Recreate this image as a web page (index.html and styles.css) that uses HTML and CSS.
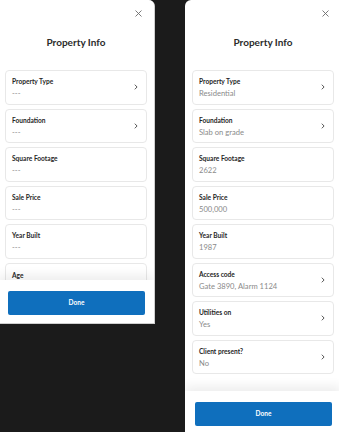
FILE: index.html
```html
<!DOCTYPE html>
<html lang="en">
<head>
  <meta charset="UTF-8" />
  <meta name="viewport" content="width=device-width, initial-scale=1.0"/>
  <title>Property Info</title>
  <link rel="stylesheet" href="styles.css">
</head>
<body>

<div class="panel panel-empty">
  <div class="panel-head">
    <div class="close-row">
      <button class="close-btn" type="button" aria-label="Close">
        <svg width="7" height="7" viewBox="0 0 7 7"><path d="M0.5 0.5 L6.5 6.5 M6.5 0.5 L0.5 6.5" stroke="#6b6b6b" stroke-width="0.9" fill="none"/></svg>
      </button>
    </div>
    <h1 class="title">Property Info</h1>
  </div>

  <div class="panel-list">
    <div class="card">
      <div class="card-text">
        <div class="card-label">Property Type</div>
        <div class="card-value">---</div>
      </div>
      <svg class="chevron" width="4" height="6" viewBox="0 0 4 6"><path d="M0.8 0.7 L3.1 3 L0.8 5.3" stroke="#555" stroke-width="1" fill="none"/></svg>
    </div>
    <div class="card">
      <div class="card-text">
        <div class="card-label">Foundation</div>
        <div class="card-value">---</div>
      </div>
      <svg class="chevron" width="4" height="6" viewBox="0 0 4 6"><path d="M0.8 0.7 L3.1 3 L0.8 5.3" stroke="#555" stroke-width="1" fill="none"/></svg>
    </div>
    <div class="card">
      <div class="card-text">
        <div class="card-label">Square Footage</div>
        <div class="card-value">---</div>
      </div>
    </div>
    <div class="card">
      <div class="card-text">
        <div class="card-label">Sale Price</div>
        <div class="card-value">---</div>
      </div>
    </div>
    <div class="card">
      <div class="card-text">
        <div class="card-label">Year Built</div>
        <div class="card-value">---</div>
      </div>
    </div>
    <div class="card card-cut">
      <div class="card-text">
        <div class="card-label">Age</div>
      </div>
    </div>
  </div>

  <div class="panel-foot">
    <button class="done-btn" type="button">Done</button>
  </div>
</div>

<div class="panel panel-filled">
  <div class="panel-head">
    <div class="close-row">
      <button class="close-btn" type="button" aria-label="Close">
        <svg width="7" height="7" viewBox="0 0 7 7"><path d="M0.5 0.5 L6.5 6.5 M6.5 0.5 L0.5 6.5" stroke="#6b6b6b" stroke-width="0.9" fill="none"/></svg>
      </button>
    </div>
    <h1 class="title">Property Info</h1>
  </div>

  <div class="panel-list">
    <div class="card">
      <div class="card-text">
        <div class="card-label">Property Type</div>
        <div class="card-value">Residential</div>
      </div>
      <svg class="chevron" width="4" height="6" viewBox="0 0 4 6"><path d="M0.8 0.7 L3.1 3 L0.8 5.3" stroke="#555" stroke-width="1" fill="none"/></svg>
    </div>
    <div class="card">
      <div class="card-text">
        <div class="card-label">Foundation</div>
        <div class="card-value">Slab on grade</div>
      </div>
      <svg class="chevron" width="4" height="6" viewBox="0 0 4 6"><path d="M0.8 0.7 L3.1 3 L0.8 5.3" stroke="#555" stroke-width="1" fill="none"/></svg>
    </div>
    <div class="card">
      <div class="card-text">
        <div class="card-label">Square Footage</div>
        <div class="card-value">2622</div>
      </div>
    </div>
    <div class="card">
      <div class="card-text">
        <div class="card-label">Sale Price</div>
        <div class="card-value">500,000</div>
      </div>
    </div>
    <div class="card">
      <div class="card-text">
        <div class="card-label">Year Built</div>
        <div class="card-value">1987</div>
      </div>
    </div>
    <div class="card">
      <div class="card-text">
        <div class="card-label">Access code</div>
        <div class="card-value">Gate 3890, Alarm 1124</div>
      </div>
      <svg class="chevron" width="4" height="6" viewBox="0 0 4 6"><path d="M0.8 0.7 L3.1 3 L0.8 5.3" stroke="#555" stroke-width="1" fill="none"/></svg>
    </div>
    <div class="card">
      <div class="card-text">
        <div class="card-label">Utilities on</div>
        <div class="card-value">Yes</div>
      </div>
      <svg class="chevron" width="4" height="6" viewBox="0 0 4 6"><path d="M0.8 0.7 L3.1 3 L0.8 5.3" stroke="#555" stroke-width="1" fill="none"/></svg>
    </div>
    <div class="card">
      <div class="card-text">
        <div class="card-label">Client present?</div>
        <div class="card-value">No</div>
      </div>
      <svg class="chevron" width="4" height="6" viewBox="0 0 4 6"><path d="M0.8 0.7 L3.1 3 L0.8 5.3" stroke="#555" stroke-width="1" fill="none"/></svg>
    </div>
  </div>

  <div class="panel-foot">
    <button class="done-btn" type="button">Done</button>
  </div>
</div>

</body>
</html>
```

FILE: styles.css
```css
body {
  margin: 0;
  width: 339px;
  height: 432px;
  overflow: hidden;
  background-color: #1b1b1b;
  display: flex;
  align-items: flex-start;
  font-family: 'Lato', 'Open Sans', sans-serif;
  color: #262626;
}

.panel {
  width: 156px;
  flex-shrink: 0;
  background: #fff;
  display: flex;
  flex-direction: column;
  overflow: hidden;
}

.panel-empty {
  margin-left: -2px;
  height: 323px;
  border-radius: 0 5px 0 0;
  box-shadow: 1px 1px 0 #cfcfcf;
}

.panel-filled {
  margin-left: auto;
  margin-right: -2px;
  height: 434px;
  border-radius: 6px 0 0 0;
}

.panel-head {
  padding: 8px 0 21px;
  flex-shrink: 0;
}

.close-row {
  display: flex;
  justify-content: flex-end;
  padding-right: 11px;
  height: 10px;
}

.close-btn {
  border: none;
  background: none;
  padding: 0;
  width: 10px;
  height: 10px;
  display: flex;
  align-items: center;
  justify-content: center;
  cursor: pointer;
}

.title {
  margin: 17px 0 0;
  font-size: 10px;
  line-height: 14px;
  font-weight: 700;
  text-align: center;
  color: #2b2b2b;
}

.panel-list {
  flex: 1;
  min-height: 0;
  overflow: hidden;
  padding: 0 7px;
  display: flex;
  flex-direction: column;
  gap: 4px;
}

.card {
  flex-shrink: 0;
  box-sizing: border-box;
  height: 34.5px;
  border: 1px solid #e8e8e8;
  border-radius: 4px;
  padding: 0 8px 0 6px;
  display: flex;
  align-items: center;
  justify-content: space-between;
}

.card-cut {
  align-items: flex-start;
  padding-top: 6px;
}

.card-text {
  display: flex;
  flex-direction: column;
  gap: 2px;
}

.card-label {
  font-size: 6.6px;
  line-height: 10px;
  font-weight: 700;
  color: #262626;
}

.card-value {
  font-size: 7.6px;
  line-height: 10px;
  color: #8a8a8a;
}

.chevron {
  flex-shrink: 0;
}

.panel-foot {
  flex-shrink: 0;
  height: 43px;
  box-sizing: border-box;
  padding: 9px 9px 10px 10px;
  background: #fff;
  box-shadow: 0 -5px 10px rgba(0, 0, 0, 0.07);
  position: relative;
}

.done-btn {
  width: 100%;
  height: 24px;
  border: none;
  border-radius: 2px;
  background: #0f6fbd;
  color: #fff;
  font-family: 'Lato', 'Open Sans', sans-serif;
  font-size: 6.5px;
  font-weight: 700;
  cursor: pointer;
}
```
